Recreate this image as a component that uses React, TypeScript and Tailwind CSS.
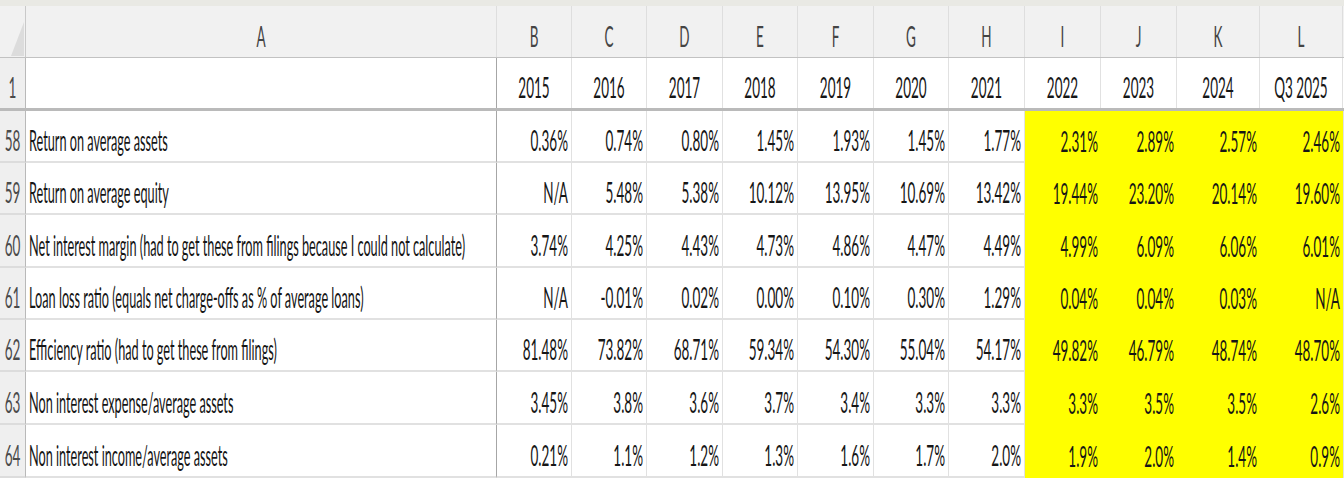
import React from 'react';

const COLS =
  'grid grid-cols-[26px_471px_75px_75px_76px_75px_76px_75px_76px_76px_76px_83px_83px_1fr]';

const letters = ['A', 'B', 'C', 'D', 'E', 'F', 'G', 'H', 'I', 'J', 'K', 'L'];
const years = ['2015', '2016', '2017', '2018', '2019', '2020', '2021', '2022', '2023', '2024', 'Q3 2025'];

interface Row {
  num: number;
  label: string;
  values: string[];
  h: string;
}

const rows: Row[] = [
  {
    num: 58,
    label: 'Return on average assets',
    values: ['0.36%', '0.74%', '0.80%', '1.45%', '1.93%', '1.45%', '1.77%', '2.31%', '2.89%', '2.57%', '2.46%'],
    h: 'h-[52px]',
  },
  {
    num: 59,
    label: 'Return on average equity',
    values: ['N/A', '5.48%', '5.38%', '10.12%', '13.95%', '10.69%', '13.42%', '19.44%', '23.20%', '20.14%', '19.60%'],
    h: 'h-[52px]',
  },
  {
    num: 60,
    label: 'Net interest margin (had to get these from filings because I could not calculate)',
    values: ['3.74%', '4.25%', '4.43%', '4.73%', '4.86%', '4.47%', '4.49%', '4.99%', '6.09%', '6.06%', '6.01%'],
    h: 'h-[53px]',
  },
  {
    num: 61,
    label: 'Loan loss ratio (equals net charge-offs as % of average loans)',
    values: ['N/A', '-0.01%', '0.02%', '0.00%', '0.10%', '0.30%', '1.29%', '0.04%', '0.04%', '0.03%', 'N/A'],
    h: 'h-[52px]',
  },
  {
    num: 62,
    label: 'Efficiency ratio (had to get these from filings)',
    values: ['81.48%', '73.82%', '68.71%', '59.34%', '54.30%', '55.04%', '54.17%', '49.82%', '46.79%', '48.74%', '48.70%'],
    h: 'h-[52px]',
  },
  {
    num: 63,
    label: 'Non interest expense/average assets',
    values: ['3.45%', '3.8%', '3.6%', '3.7%', '3.4%', '3.3%', '3.3%', '3.3%', '3.5%', '3.5%', '2.6%'],
    h: 'h-[53px]',
  },
  {
    num: 64,
    label: 'Non interest income/average assets',
    values: ['0.21%', '1.1%', '1.2%', '1.3%', '1.6%', '1.7%', '2.0%', '1.9%', '2.0%', '1.4%', '0.9%'],
    h: 'h-[53px]',
  },
];

// stretched text, like the zoomed sheet
const T = ({ children }: { children: React.ReactNode }) => (
  <span className="inline-block scale-y-[2.1] whitespace-nowrap leading-none">{children}</span>
);

const Label = ({ children }: { children: React.ReactNode }) => (
  <span className="inline-block origin-left scale-x-[0.94] scale-y-[2.1] whitespace-nowrap leading-none">
    {children}
  </span>
);

export default function App() {
  return (
    <div className="w-[1344px] h-[480px] overflow-hidden bg-white text-[13.5px] text-[#161616] font-['Lato','Liberation_Sans',sans-serif]">
      {/* top strip */}
      <div className="h-[6px] bg-[#e9e9e4]" />

      {/* column letters */}
      <div className={`${COLS} h-[52px] bg-[#f1f1f1] border-b border-[#c2c2c2] text-[#444]`}>
        <div className="relative border-r border-[#c9c9c9]">
          <svg className="absolute left-[11px] top-[16px]" width="13" height="34" viewBox="0 0 13 34">
            <polygon points="13,0 13,34 0,34" fill="#dcdcdc" />
          </svg>
        </div>
        {letters.map((l) => (
          <div key={l} className="flex items-center justify-center pt-[12px] border-r border-[#dedede]">
            <T>{l}</T>
          </div>
        ))}
        <div />
      </div>

      {/* row 1 */}
      <div className={`${COLS} h-[53px] border-b-[3px] border-[#bababa]`}>
        <div className="flex items-center justify-center pt-[12px] bg-[#efefef] border-r border-[#b9b9b9] text-[#4a4a4a]">
          <T>1</T>
        </div>
        <div className="border-r border-[#a6a6a6]" />
        {years.map((y) => (
          <div key={y} className="flex items-center justify-center pt-[12px] border-r border-[#e1e1e1]">
            <T>{y}</T>
          </div>
        ))}
        <div />
      </div>

      {/* data rows */}
      {rows.map((r) => (
        <div key={r.num} className={`${COLS} ${r.h}`}>
          <div className="flex items-center justify-center pt-[12px] bg-[#efefef] border-r border-b-2 border-r-[#b9b9b9] border-b-[#dcdcdc] text-[#4a4a4a]">
            <T>{r.num}</T>
          </div>
          <div className="flex items-center pl-[3px] pt-[12px] border-r border-b-2 border-r-[#a6a6a6] border-b-[#e1e1e1]">
            <Label>{r.label}</Label>
          </div>
          {r.values.map((v, i) => (
            <div
              key={i}
              className={
                i >= 7
                  ? 'flex items-center justify-end pr-[3px] pt-[12px] bg-[#ffff00]'
                  : 'flex items-center justify-end pr-[3px] pt-[12px] border-r border-b-2 border-[#e1e1e1]'
              }
            >
              <T>{v}</T>
            </div>
          ))}
          <div className="border-l border-[#e1e1e1]" />
        </div>
      ))}
    </div>
  );
}
